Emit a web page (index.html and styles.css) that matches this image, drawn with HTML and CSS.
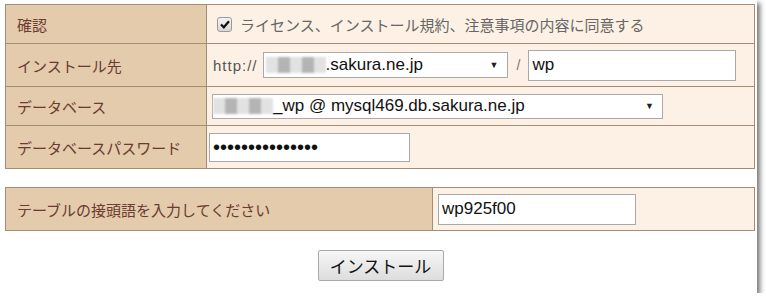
FILE: index.html
```html
<!DOCTYPE html>
<html lang="ja">
<head>
<meta charset="UTF-8">
<title>インストール</title>
<link rel="stylesheet" href="styles.css">
</head>
<body>
<div class="panel">
    <table class="form-table">
        <tr class="row-short">
            <th>確認</th>
            <td>
                <label class="agree">
                    <span class="check">
                        <svg width="10" height="9" viewBox="0 0 10 9"><path d="M1 4.5 L3.8 7.3 L9 1.2" fill="none" stroke="#111" stroke-width="2.2"/></svg>
                    </span>
                    ライセンス、インストール規約、注意事項の内容に同意する
                </label>
            </td>
        </tr>
        <tr class="row-tall">
            <th>インストール先</th>
            <td>
                <div class="cell-line">
                    <span class="scheme">http://</span>
                    <div class="fake-select domain">
                        <span class="blur"><i></i><i class="dark"></i><i></i><i class="dark"></i><i></i></span>
                        <span class="sel-text">.sakura.ne.jp</span>
                        <span class="arrow">▼</span>
                    </div>
                    <span class="slash">/</span>
                    <input type="text" class="text-input dir" value="wp">
                </div>
            </td>
        </tr>
        <tr class="row-short">
            <th>データベース</th>
            <td>
                <div class="fake-select dbname">
                    <span class="blur"><i></i><i class="dark"></i><i></i><i class="dark"></i><i></i></span>
                    <span class="sel-text">_wp @ mysql469.db.sakura.ne.jp</span>
                    <span class="arrow">▼</span>
                </div>
            </td>
        </tr>
        <tr class="row-tall">
            <th>データベースパスワード</th>
            <td>
                <input type="password" class="text-input pass" value="xxxxxxxxxxxxxxx">
            </td>
        </tr>
    </table>

    <table class="form-table prefix-table">
        <tr class="row-tall">
            <th>テーブルの接頭語を入力してください</th>
            <td>
                <input type="text" class="text-input prefix" value="wp925f00">
            </td>
        </tr>
    </table>

    <div class="actions">
        <button type="button" class="btn">インストール</button>
    </div>
</div>
</body>
</html>
```

FILE: styles.css
```css
body {
    margin: 0;
    background-color: #ffffff;
    font-family: "Noto Sans CJK JP", "Noto Sans", sans-serif;
}
.panel {
    width: 757px;
    height: 293px;
    box-sizing: border-box;
    padding: 4px 0 0 5px;
    background-color: #ffffff;
    box-shadow: 3px 3px 5px rgba(0, 0, 0, 0.55);
}
.form-table {
    width: 750px;
    border-collapse: collapse;
}
.form-table th,
.form-table td {
    border: 1px solid #a38d76;
    padding: 0;
    vertical-align: middle;
}
.form-table th {
    width: 189px;
    padding-left: 11px;
    text-align: left;
    font-weight: normal;
    font-size: 15px;
    color: #6b3a30;
    background-color: #e3cbab;
}
.form-table td {
    background-color: #fdf1e5;
}
.row-short {
    height: 39px;
}
.row-tall {
    height: 43px;
}
.agree {
    display: flex;
    align-items: center;
    gap: 8px;
    margin-left: 10px;
    font-size: 15px;
    color: #666666;
}
.check {
    display: flex;
    align-items: center;
    justify-content: center;
    width: 13px;
    height: 13px;
    border: 1px solid #9a9a9a;
    border-radius: 3px;
    background: linear-gradient(#f4f4f4, #d8d8d8);
}
.cell-line {
    display: flex;
    align-items: center;
    margin-left: 6px;
}
.scheme {
    font-family: "Liberation Sans", Arial, sans-serif;
    font-size: 15px;
    letter-spacing: 1px;
    color: #555555;
    margin-right: 5px;
}
.fake-select {
    display: flex;
    align-items: center;
    box-sizing: border-box;
    border: 1px solid #a9a9a9;
    background-color: #ffffff;
    font-family: "Liberation Sans", Arial, sans-serif;
    font-size: 17px;
    color: #111111;
}
.fake-select .sel-text {
    flex: 1;
}
.fake-select .arrow {
    font-size: 9px;
    color: #222222;
    margin-right: 8px;
}
.domain {
    width: 245px;
    height: 26px;
    padding-left: 2px;
}
.dbname {
    width: 451px;
    height: 25px;
    margin-left: 5px;
}
.blur {
    display: flex;
    height: 16px;
    filter: blur(1.2px);
}
.blur i {
    width: 12px;
    background-color: #e2e2e2;
}
.blur i.dark {
    background-color: #b4b4b4;
}
.slash {
    font-family: "Liberation Sans", Arial, sans-serif;
    font-size: 14px;
    color: #777777;
    margin: 0 8px 0 9px;
}
.text-input {
    box-sizing: border-box;
    border: 1px solid #a9a9a9;
    background-color: #ffffff;
    padding: 0 3px;
    font-family: "Liberation Sans", Arial, sans-serif;
    font-size: 17px;
    color: #111111;
    outline: none;
}
.dir {
    width: 208px;
    height: 31px;
}
.pass {
    width: 201px;
    height: 29px;
    margin-left: 2px;
    font-size: 20px;
}
.prefix {
    width: 198px;
    height: 31px;
    margin-left: 5px;
}
.prefix-table {
    margin-top: 18px;
}
.prefix-table th {
    width: 415px;
}
.actions {
    display: flex;
    justify-content: center;
    margin-top: 19px;
    padding-right: 1px;
}
.btn {
    width: 126px;
    height: 31px;
    border: 1px solid #a9a9a9;
    border-radius: 2px;
    background: linear-gradient(#f6f6f6, #dddddd);
    font-family: "Noto Sans CJK JP", sans-serif;
    font-size: 17px;
    color: #111111;
    padding: 0;
}
```
